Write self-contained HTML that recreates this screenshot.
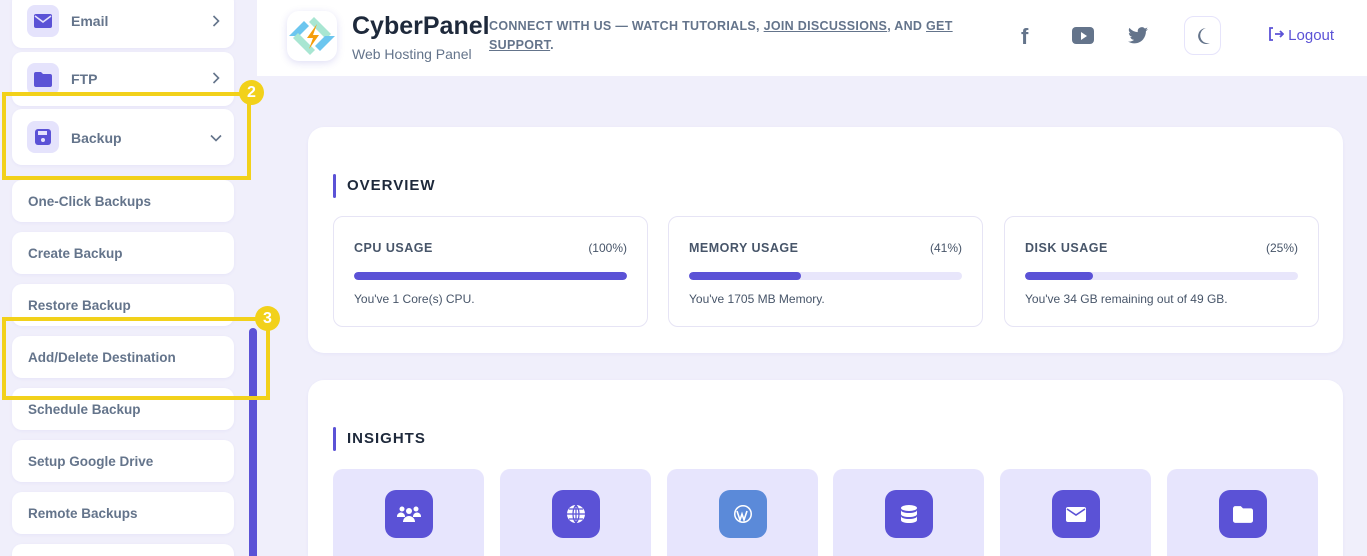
<!DOCTYPE html>
<html style="overflow:hidden;height:556px"><head><style>
*{box-sizing:border-box;margin:0;padding:0}
body{width:1367px;height:556px;overflow:hidden;background:#f0effb;font-family:"Liberation Sans",sans-serif;position:relative;color:#1e293b}
.a{position:absolute}
.card{position:absolute;background:#fff;border-radius:10px;box-shadow:0 1px 3px rgba(80,70,200,.06)}
.sub{left:12px;width:222px;height:42px;font-size:13.5px;font-weight:bold;color:#64748b;padding:15px 16px;line-height:14px}
.ic{position:absolute;left:15px;width:32px;height:32px;border-radius:8px;background:#e5e3fc;display:flex;align-items:center;justify-content:center}
.lbl{position:absolute;left:59px;font-size:14px;font-weight:bold;color:#64748b}
.chev{position:absolute;right:14px}
.box{position:absolute;border:4px solid #f2d11a}
.badge{position:absolute;width:25px;height:25px;border-radius:50%;background:#f2d11a;color:#fff;font-weight:bold;font-size:16px;text-align:center;line-height:25px}
.stat{position:absolute;top:216px;width:315px;height:111px;border:1px solid #e6e4f5;border-radius:10px}
.stat .t{position:absolute;left:20px;top:24px;font-size:12.5px;font-weight:bold;color:#475569;letter-spacing:.5px}
.stat .p{position:absolute;right:20px;top:24px;font-size:12px;color:#475569}
.stat .bar{position:absolute;left:20px;right:20px;top:55px;height:8px;border-radius:4px;background:#e8e6fb;overflow:hidden}
.stat .bar i{display:block;height:8px;background:#5b52d6;border-radius:4px}
.stat .d{position:absolute;left:20px;top:75px;font-size:12px;color:#475569}
.tile{position:absolute;top:469px;width:151px;height:87px;background:#e7e5fd;border-radius:10px 10px 0 0}
.tile .ti{position:absolute;left:52px;top:21px;width:48px;height:48px;border-radius:11px;background:#5b52d6;display:flex;align-items:center;justify-content:center}
.h{position:absolute;left:25px;font-size:15px;font-weight:bold;letter-spacing:1px;color:#1e293b}
.h:before{content:"";position:absolute;left:-14px;top:-3px;width:3px;height:24px;background:#5b52d6;border-radius:2px}
</style></head><body>

<!-- sidebar -->
<div class="card" style="left:12px;top:-8px;width:222px;height:56px"><div class="ic" style="top:13px"><svg width="18" height="14" viewBox="0 0 18 14"><rect width="18" height="14" rx="2" fill="#5b52d6"/><path d="M1 2l8 6 8-6" stroke="#e5e3fc" stroke-width="1.6" fill="none"/></svg></div><span class="lbl" style="top:21px">Email</span><svg class="chev" style="top:23px" width="8" height="12" viewBox="0 0 8 12"><path d="M1.5 1l5 5-5 5" stroke="#64748b" stroke-width="1.6" fill="none"/></svg></div>
<div class="card" style="left:12px;top:52px;width:222px;height:54px"><div class="ic" style="top:11px"><svg width="18" height="15" viewBox="0 0 18 15"><path d="M0 2a2 2 0 0 1 2-2h5l2 2h7a2 2 0 0 1 2 2v9a2 2 0 0 1-2 2H2a2 2 0 0 1-2-2z" fill="#5b52d6"/></svg></div><span class="lbl" style="top:19px">FTP</span><svg class="chev" style="top:20px" width="8" height="12" viewBox="0 0 8 12"><path d="M1.5 1l5 5-5 5" stroke="#64748b" stroke-width="1.6" fill="none"/></svg></div>
<div class="card" style="left:12px;top:109px;width:222px;height:56px"><div class="ic" style="top:12px"><svg width="16" height="16" viewBox="0 0 16 16"><rect width="16" height="16" rx="3" fill="#5b52d6"/><rect x="3" y="2" width="9" height="4" fill="#e5e3fc"/><circle cx="8" cy="11" r="2" fill="#e5e3fc"/></svg></div><span class="lbl" style="top:21px">Backup</span><svg class="chev" style="top:25px;right:12px" width="12" height="8" viewBox="0 0 12 8"><path d="M1 1.5l5 5 5-5" stroke="#64748b" stroke-width="1.6" fill="none"/></svg></div>
<div class="card sub" style="top:180px">One-Click Backups</div>
<div class="card sub" style="top:232px">Create Backup</div>
<div class="card sub" style="top:284px">Restore Backup</div>
<div class="card sub" style="top:336px">Add/Delete Destination</div>
<div class="card sub" style="top:388px">Schedule Backup</div>
<div class="card sub" style="top:440px">Setup Google Drive</div>
<div class="card sub" style="top:492px">Remote Backups</div>
<div class="card sub" style="top:544px;height:12px"></div>
<div class="a" style="left:249px;top:328px;width:8px;height:228px;background:#5b52d6;border-radius:4px 4px 0 0"></div>
<div class="box" style="left:2px;top:92px;width:249px;height:88px"></div>
<div class="badge" style="left:239px;top:80px">2</div>
<div class="box" style="left:2px;top:317px;width:268px;height:83px"></div>
<div class="badge" style="left:255px;top:306px">3</div>

<!-- header -->
<div class="a" style="left:257px;top:0;width:1110px;height:76px;background:#fff"></div>
<div class="a" style="left:287px;top:11px;width:50px;height:50px;border-radius:12px;background:#fff;box-shadow:0 2px 8px rgba(80,70,200,.18)">
<svg width="50" height="50" viewBox="0 0 50 50"><path d="M2 25L17 10l5 5-10 10z" fill="#6cc6ef"/><path d="M27 6l17 17-5 5-17-17z" fill="#a8e6d2"/><path d="M48 25L33 40l-5-5 10-10z" fill="#6cc6ef"/><path d="M23 44L6 27l5-5 17 17z" fill="#a8e6d2"/><path d="M30 13l-10 14h6l-4 11 10-14h-6z" fill="#f59e0b"/></svg></div>
<div class="a" style="left:352px;top:12px;font-size:25px;font-weight:bold;color:#1e293b">CyberPanel</div>
<div class="a" style="left:352px;top:46px;font-size:14px;color:#64748b">Web Hosting Panel</div>
<div class="a" style="left:489px;top:17px;width:480px;font-size:12.5px;font-weight:bold;color:#64748b;line-height:19px;letter-spacing:.3px">CONNECT WITH US — WATCH TUTORIALS, <u>JOIN DISCUSSIONS</u>, AND <u>GET<br>SUPPORT</u>.</div>
<div class="a" style="left:1021px;top:24px;font-size:22px;font-weight:bold;color:#64748b">f</div>
<div class="a" style="left:1072px;top:27px;width:22px;height:17px;border-radius:4px;background:#64748b"><div class="a" style="left:9px;top:5px;border-left:6px solid #fff;border-top:4px solid transparent;border-bottom:4px solid transparent"></div></div>
<svg class="a" style="left:1128px;top:27px" width="20" height="17" viewBox="0 0 24 20"><path d="M24 2.4a10 10 0 0 1-2.8.8A5 5 0 0 0 23.3.4a10 10 0 0 1-3.1 1.2A4.9 4.9 0 0 0 11.8 6 14 14 0 0 1 1.7.9a4.9 4.9 0 0 0 1.5 6.6 5 5 0 0 1-2.2-.6 4.9 4.9 0 0 0 3.9 4.8 5 5 0 0 1-2.2.1 4.9 4.9 0 0 0 4.6 3.4A9.9 9.9 0 0 1 0 17.2 14 14 0 0 0 7.5 19.4c9 0 14-7.5 14-14v-.6A10 10 0 0 0 24 2.4z" fill="#64748b"/></svg>
<div class="a" style="left:1184px;top:16px;width:37px;height:39px;border:1px solid #e6e4fb;border-radius:10px"><svg class="a" style="left:10px;top:10px" width="16" height="18" viewBox="0 0 16 18"><path d="M11 1a8 8 0 1 0 4 15A7 7 0 0 1 11 1z" fill="#64748b"/></svg></div>
<div class="a" style="left:1268px;top:27px;font-size:15px;color:#5b52d6"><svg width="16" height="14" viewBox="0 0 16 14" style="vertical-align:-1px"><path d="M5 1H2v12h3M7 7h8M12 4l3 3-3 3" stroke="#5b52d6" stroke-width="1.8" fill="none"/></svg> Logout</div>

<!-- overview -->
<div class="card" style="left:308px;top:127px;width:1035px;height:226px;border-radius:16px"></div>
<div class="h" style="left:347px;top:177px">OVERVIEW</div>
<div class="stat" style="left:333px"><span class="t">CPU USAGE</span><span class="p">(100%)</span><div class="bar"><i style="width:100%"></i></div><span class="d">You've 1 Core(s) CPU.</span></div>
<div class="stat" style="left:668px"><span class="t">MEMORY USAGE</span><span class="p">(41%)</span><div class="bar"><i style="width:41%"></i></div><span class="d">You've 1705 MB Memory.</span></div>
<div class="stat" style="left:1004px"><span class="t">DISK USAGE</span><span class="p">(25%)</span><div class="bar"><i style="width:25%"></i></div><span class="d">You've 34 GB remaining out of 49 GB.</span></div>

<!-- insights -->
<div class="card" style="left:308px;top:380px;width:1035px;height:176px;border-radius:16px 16px 0 0"></div>
<div class="h" style="left:347px;top:430px">INSIGHTS</div>
<div class="tile" style="left:333px"><div class="ti"><svg width="24" height="18" viewBox="0 0 24 18"><circle cx="5" cy="4" r="2.5" fill="#fff"/><circle cx="19" cy="4" r="2.5" fill="#fff"/><circle cx="12" cy="6" r="3" fill="#fff"/><path d="M0 12a4 4 0 0 1 8-1v1zM24 12a4 4 0 0 0-8-1v1zM6 17a6 6 0 0 1 12 0z" fill="#fff"/></svg></div></div>
<div class="tile" style="left:500px"><div class="ti"><svg width="20" height="20" viewBox="0 0 20 20"><circle cx="10" cy="10" r="9" fill="#fff"/><path d="M1 10h18M10 1v18M3 5h14M3 15h14M10 1c-4 4-4 14 0 18M10 1c4 4 4 14 0 18" stroke="#5b52d6" stroke-width="1.2" fill="none"/></svg></div></div>
<div class="tile" style="left:667px"><div class="ti" style="background:#5b8ad9"><svg width="20" height="20" viewBox="0 0 20 20"><circle cx="10" cy="10" r="9" fill="#fff"/><circle cx="10" cy="10" r="7.5" fill="#5b8ad9"/><path d="M4 7l3 9 2-6 2 6 3-9" stroke="#fff" stroke-width="1.6" fill="none"/></svg></div></div>
<div class="tile" style="left:833px"><div class="ti"><svg width="18" height="20" viewBox="0 0 18 20"><ellipse cx="9" cy="4" rx="8" ry="3" fill="#fff"/><path d="M1 6c0 4 16 4 16 0v4c0 4-16 4-16 0zM1 12c0 4 16 4 16 0v4c0 4-16 4-16 0z" fill="#fff"/></svg></div></div>
<div class="tile" style="left:1000px"><div class="ti"><svg width="20" height="15" viewBox="0 0 20 15"><rect width="20" height="15" rx="2" fill="#fff"/><path d="M1 2l9 6 9-6" stroke="#5b52d6" stroke-width="1.6" fill="none"/></svg></div></div>
<div class="tile" style="left:1167px"><div class="ti"><svg width="20" height="17" viewBox="0 0 18 15"><path d="M0 2a2 2 0 0 1 2-2h5l2 2h7a2 2 0 0 1 2 2v9a2 2 0 0 1-2 2H2a2 2 0 0 1-2-2z" fill="#fff"/></svg></div></div>
</body></html>
